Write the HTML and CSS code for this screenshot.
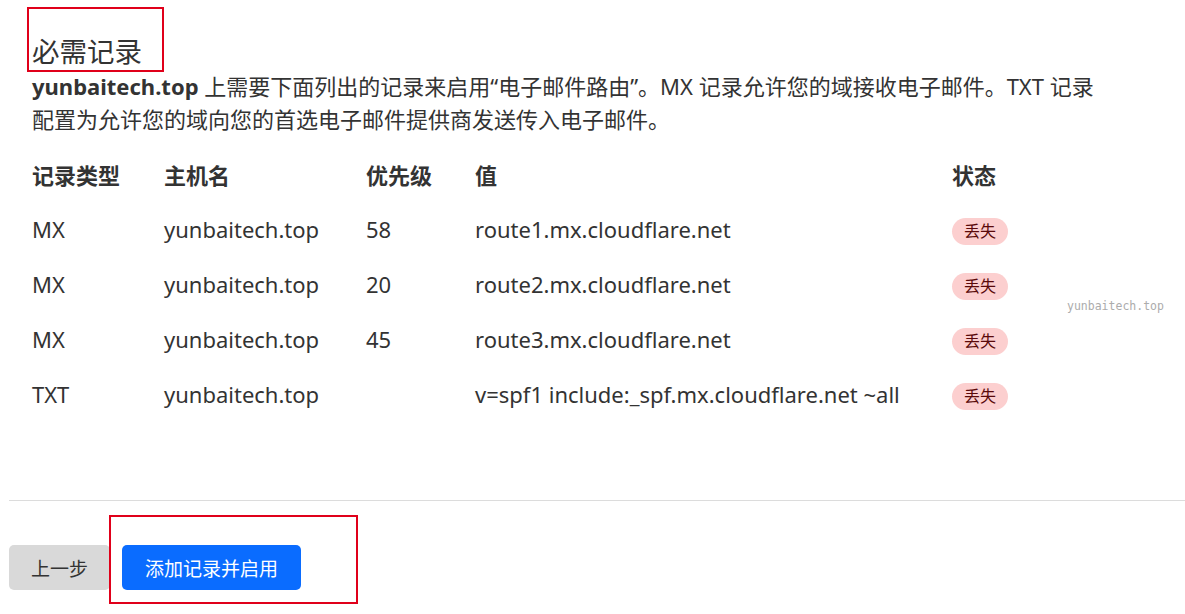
FILE: index.html
```html
<!DOCTYPE html>
<html lang="zh-CN">
<head>
<meta charset="utf-8">
<title>必需记录</title>
<link rel="stylesheet" href="styles.css">
</head>
<body>
<div class="page">
  <section class="records">
    <h2 class="title">必需记录</h2>
    <p class="desc"><strong>yunbaitech.top</strong> 上需要下面列出的记录来启用“电子邮件路由”。MX 记录允许您的域接收电子邮件。TXT 记录配置为允许您的域向您的首选电子邮件提供商发送传入电子邮件。</p>
    <div class="table">
      <div class="row head">
        <div>记录类型</div><div>主机名</div><div>优先级</div><div>值</div><div>状态</div>
      </div>
      <div class="row">
        <div>MX</div><div>yunbaitech.top</div><div>58</div><div>route1.mx.cloudflare.net</div><div><span class="badge">丢失</span></div>
      </div>
      <div class="row">
        <div>MX</div><div>yunbaitech.top</div><div>20</div><div>route2.mx.cloudflare.net</div><div><span class="badge">丢失</span></div>
      </div>
      <div class="row">
        <div>MX</div><div>yunbaitech.top</div><div>45</div><div>route3.mx.cloudflare.net</div><div><span class="badge">丢失</span></div>
      </div>
      <div class="row">
        <div>TXT</div><div>yunbaitech.top</div><div></div><div>v=spf1 include:_spf.mx.cloudflare.net ~all</div><div><span class="badge">丢失</span></div>
      </div>
    </div>
  </section>
  <footer class="actions">
    <button class="btn btn-back">上一步</button>
    <button class="btn btn-primary">添加记录并启用</button>
  </footer>
  <div class="watermark">yunbaitech.top</div>
  <div class="mark mark-title"></div>
  <div class="mark mark-button"></div>
</div>
</body>
</html>
```

FILE: styles.css
```css
html, body {
  margin: 0;
  padding: 0;
  background: #fff;
}
body {
  font-family: "Noto Sans", "Noto Sans CJK SC", sans-serif;
  color: #333;
}
.page {
  position: relative;
  width: 1185px;
  height: 614px;
  padding-left: 9px;
  box-sizing: border-box;
}
.records {
  padding: 35px 0 0 23px;
}
.title {
  margin: 0;
  font-size: 27.5px;
  line-height: 33px;
  font-weight: 400;
  color: #333;
}
.desc {
  margin: 2px 0 0;
  font-size: 22px;
  line-height: 33px;
  width: 1080px;
  color: #333;
}
.desc strong {
  font-weight: 700;
}
.table {
  margin-top: 11px;
  font-size: 22px;
}
.row {
  display: grid;
  grid-template-columns: 132px 202px 109px 477px auto;
  align-items: center;
  height: 55px;
}
.row.head {
  height: 54px;
  font-weight: 700;
}
.badge {
  display: inline-block;
  background: #fccfcf;
  color: #5a0a0a;
  font-size: 16px;
  line-height: 27px;
  height: 27px;
  padding: 0 12px;
  border-radius: 14px;
  margin-top: 4px;
  vertical-align: middle;
}
.actions {
  margin-top: 79px;
  border-top: 1px solid #dcdcdc;
  padding-top: 44px;
  display: flex;
  gap: 12px;
}
.btn {
  font-family: "Noto Sans CJK SC", "Noto Sans", sans-serif;
  font-size: 19px;
  height: 45px;
  padding: 0 22px;
  border: none;
  border-radius: 5px;
  cursor: pointer;
}
.btn-back {
  background: #d9d9d9;
  color: #333;
}
.btn-primary {
  background: #0a6cff;
  color: #fff;
  padding: 0 23px;
}
.watermark {
  position: absolute;
  left: 1067px;
  top: 299px;
  font-family: "DejaVu Sans Mono", monospace;
  font-size: 11.5px;
  color: #acacac;
}
.mark {
  position: absolute;
  border: 2px solid #e0001a;
  box-sizing: border-box;
}
.mark-title {
  left: 27px;
  top: 7px;
  width: 137px;
  height: 65px;
}
.mark-button {
  left: 109px;
  top: 515px;
  width: 249px;
  height: 89px;
}
```
